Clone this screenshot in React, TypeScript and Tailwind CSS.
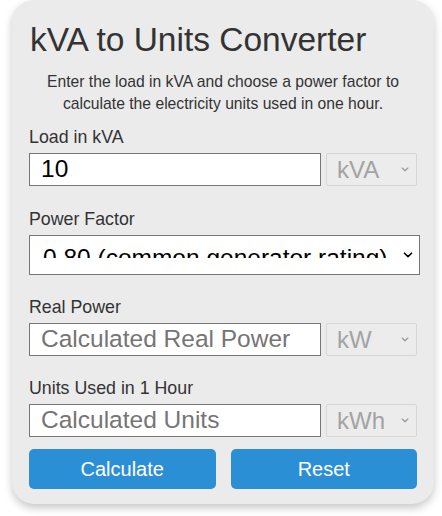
import React from "react";

function Chevron({ className }: { className?: string }) {
  return (
    <svg viewBox="0 0 10 6" className={className} fill="none" stroke="currentColor" strokeWidth="1.6" strokeLinecap="round" strokeLinejoin="round">
      <path d="M1.5 1.2 L5 4.6 L8.5 1.2" />
    </svg>
  );
}

function UnitSelect({ label }: { label: string }) {
  return (
    <div className="w-[91px] h-[33px] border border-[#d6d6d6] rounded-[2px] bg-[#ececec] flex items-center justify-between pl-[10px] pr-[7px] text-[#a3a3a3] text-[24px] leading-none shrink-0">
      <span>{label}</span>
      <Chevron className="w-[8px] h-[5px] text-[#9a9a9a]" />
    </div>
  );
}

function Field({ label, value, placeholder, unit, className }: { label: string; value?: string; placeholder?: string; unit: string; className?: string }) {
  return (
    <div className={className}>
      <div className="text-[17.8px] leading-[21px] text-[#333] mb-[5px]">{label}</div>
      <div className="flex gap-[5px]">
        <div className="w-[292px] h-[33px] border border-[#767676] bg-white flex items-center pl-[11px] text-[24.5px] leading-none overflow-hidden whitespace-nowrap">
          {value ? <span className="text-black">{value}</span> : <span className="text-[#757575]">{placeholder}</span>}
        </div>
        <UnitSelect label={unit} />
      </div>
    </div>
  );
}

export default function App() {
  return (
    <div className="w-[442px] h-[516px] bg-white" style={{ fontFamily: '"Liberation Sans", Arial, sans-serif' }}>
      <div className="ml-[12px] w-[422px] bg-[#ebebeb] rounded-[22px] shadow-[0_4px_8px_rgba(0,0,0,0.22)] px-[17px] pt-[20px] pb-[15px]">
        <h1 className="text-[33.5px] leading-[40px] text-[#333] pl-[1px]">kVA to Units Converter</h1>
        <p className="mt-[11px] text-[15.7px] leading-[21.5px] text-[#333] text-center">
          Enter the load in kVA and choose a power factor to calculate the electricity units used in one hour.
        </p>
        <Field className="mt-[13px]" label="Load in kVA" value="10" unit="kVA" />
        <div className="mt-[23px]">
          <div className="text-[17.8px] leading-[21px] text-[#333] mb-[5px]">Power Factor</div>
          <div className="w-[391px] h-[40px] border border-[#767676] bg-white relative">
            <div className="absolute left-[13px] top-0 right-[30px] h-[22px] overflow-hidden">
              <div className="pt-[10px] text-[24.5px] leading-[24px] text-black whitespace-nowrap">0.80 (common generator rating)</div>
            </div>
            <Chevron className="absolute right-[6px] top-[16px] w-[10px] h-[6px] text-black" />
          </div>
        </div>
        <Field className="mt-[22px]" label="Real Power" placeholder="Calculated Real Power" unit="kW" />
        <Field className="mt-[22px]" label="Units Used in 1 Hour" placeholder="Calculated Units" unit="kWh" />
        <div className="mt-[12px] flex gap-[15px]">
          <button className="w-[187px] h-[40px] rounded-[5px] bg-[#2b8fd6] text-white text-[20px]">Calculate</button>
          <button className="w-[187px] h-[40px] rounded-[5px] bg-[#2b8fd6] text-white text-[20px]">Reset</button>
        </div>
      </div>
    </div>
  );
}
